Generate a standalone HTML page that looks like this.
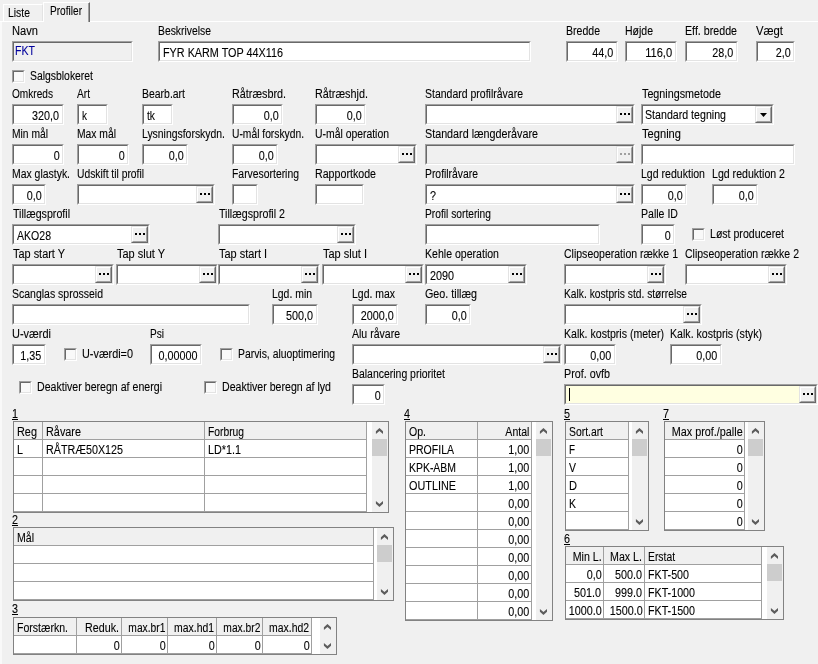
<!DOCTYPE html>
<html><head><meta charset="utf-8"><title>Profiler</title>
<style>
html,body{margin:0;padding:0}
body{width:818px;height:664px;background:#f0f0f0;position:relative;overflow:hidden;
 font-family:"Liberation Sans",sans-serif;font-size:12px;line-height:14px;color:#000}
.t{position:absolute;white-space:nowrap;display:block;height:14px;transform-origin:0 50%;backface-visibility:hidden;-webkit-text-stroke:0.1px currentColor}
.t.tr{transform-origin:100% 50%}
.t.u{text-decoration:underline;text-underline-offset:1px;text-decoration-thickness:1px}
.ed{position:absolute;box-sizing:border-box;background:#fff;border-style:solid;border-width:1px;
 border-color:#a0a0a0 #fff #fff #a0a0a0;}
.ed:before{content:"";position:absolute;left:0;top:0;right:0;bottom:0;border-style:solid;border-width:1px;
 border-color:#696969 #e3e3e3 #e3e3e3 #696969;}
.eb{position:absolute;right:1px;top:1px;bottom:1px;width:17px;box-sizing:border-box;background:#f0f0f0;
 border-style:solid;border-width:1px;border-color:#e3e3e3 #696969 #696969 #e3e3e3;z-index:2}
.eb:before{content:"";position:absolute;left:0;top:0;right:0;bottom:0;border-style:solid;border-width:1px;
 border-color:#fff #a0a0a0 #a0a0a0 #fff;}
.eb i{position:absolute;top:6px;width:2px;height:2px;background:#000}
.eb i:nth-child(1){left:3px} .eb i:nth-child(2){left:7px} .eb i:nth-child(3){left:11px}
.eb.dis i{background:#a0a0a0}
.dd{position:absolute;right:1px;top:1px;bottom:1px;width:17px;box-sizing:border-box;background:#f0f0f0;
 border-style:solid;border-width:1px;border-color:#e3e3e3 #696969 #696969 #e3e3e3;z-index:2}
.dd:before{content:"";position:absolute;left:0;top:0;right:0;bottom:0;border-style:solid;border-width:1px;
 border-color:#fff #a0a0a0 #a0a0a0 #fff;}
.dd svg{position:absolute;left:4px;top:6px}
.caret{position:absolute;left:4px;top:3px;width:1px;height:13px;background:#000}
.cb{position:absolute;width:13px;height:13px;box-sizing:border-box;background:#f9f9f9;border-style:solid;border-width:1px;
 border-color:#a0a0a0 #fff #fff #a0a0a0;}
.cb:before{content:"";position:absolute;left:0;top:0;right:0;bottom:0;border-style:solid;border-width:1px;
 border-color:#696969 #e3e3e3 #e3e3e3 #696969;}
.gr{position:absolute;box-sizing:border-box;background:#fff;border:1px solid #828282}
.gr>div{position:absolute}
.gh{background:#f0f0f0}
.gl{background:#a0a0a0}
.sb{background:#f0f0f0}
.sb svg{position:absolute;left:0;top:0}
.th{position:absolute;left:0;top:17px;width:15px;height:17px;background:#cdcdcd}
.tabline{position:absolute;height:1px;background:#fff}
.paneleft{position:absolute;left:0;top:22px;width:2px;height:642px;background:#f9f9f9}
.tab1{position:absolute;left:3px;top:4px;width:40px;height:17px;box-sizing:border-box;border:1px solid #fff;border-bottom:none;border-right:1px solid #e3e3e3}
.tab2{position:absolute;left:43px;top:2px;width:47px;height:20px;box-sizing:border-box;border-left:1px solid #fff;border-top:1px solid #fff;border-right:1px solid #696969;box-shadow:inset -1px 0 0 #a0a0a0;background:#f0f0f0}
</style></head>
<body>
<div class="tabline" style="left:0;top:21px;width:43px"></div>
<div class="tabline" style="left:90px;top:21px;width:728px"></div>
<div class="paneleft"></div>
<div class="tab1"></div>
<div class="tab2"></div>
<span class="t" style="top:6px;left:8px;transform:scaleX(0.8675);">Liste</span>
<span class="t" style="top:4px;left:50px;transform:scaleX(0.8418);">Profiler</span>
<span class="t" style="top:24px;left:12.3px;transform:scaleX(0.9281);">Navn</span>
<div class="ed" style="left:12px;top:41px;width:121px;height:21px;background:#f0f0f0;">
</div>
<span class="t" style="top:44px;left:15px;color:#00009c;transform:scaleX(0.8822);">FKT</span>
<span class="t" style="top:24px;left:158.3px;transform:scaleX(0.8638);">Beskrivelse</span>
<div class="ed" style="left:158px;top:41px;width:373px;height:21px;">
</div>
<span class="t" style="top:46px;left:163px;transform:scaleX(0.9011);">FYR KARM TOP 44X116</span>
<span class="t" style="top:24px;left:566.3px;transform:scaleX(0.8785);">Bredde</span>
<div class="ed" style="left:566px;top:41px;width:52px;height:21px;">
</div>
<span class="t tr" style="top:46px;right:204.60000000000002px;transform:scaleX(0.899);">44,0</span>
<span class="t" style="top:24px;left:625.3px;transform:scaleX(0.8746);">Højde</span>
<div class="ed" style="left:625px;top:41px;width:52px;height:21px;">
</div>
<span class="t tr" style="top:46px;right:145.60000000000002px;transform:scaleX(0.9265);">116,0</span>
<span class="t" style="top:24px;left:685.3px;transform:scaleX(0.8889);">Eff. bredde</span>
<div class="ed" style="left:685px;top:41px;width:53px;height:21px;">
</div>
<span class="t tr" style="top:46px;right:84.60000000000002px;transform:scaleX(0.899);">28,0</span>
<span class="t" style="top:24px;left:756.3px;transform:scaleX(0.9412);">Vægt</span>
<div class="ed" style="left:756px;top:41px;width:39px;height:21px;">
</div>
<span class="t tr" style="top:46px;right:27.600000000000023px;transform:scaleX(0.8989);">2,0</span>
<div class="cb" style="left:12px;top:70px"></div>
<span class="t" style="top:69px;left:30.3px;transform:scaleX(0.8664);">Salgsblokeret</span>
<span class="t" style="top:87px;left:12.3px;transform:scaleX(0.8421);">Omkreds</span>
<div class="ed" style="left:12px;top:104px;width:52px;height:21px;">
</div>
<span class="t tr" style="top:109px;right:758.6px;transform:scaleX(0.8991);">320,0</span>
<span class="t" style="top:87px;left:77.3px;transform:scaleX(0.8473);">Art</span>
<div class="ed" style="left:77px;top:104px;width:31px;height:21px;">
</div>
<span class="t" style="top:109px;left:82px;transform:scaleX(0.8333);">k</span>
<span class="t" style="top:87px;left:142.3px;transform:scaleX(0.8712);">Bearb.art</span>
<div class="ed" style="left:142px;top:104px;width:31px;height:21px;">
</div>
<span class="t" style="top:109px;left:147px;transform:scaleX(0.8562);">tk</span>
<span class="t" style="top:87px;left:232.3px;transform:scaleX(0.8995);">Råtræsbrd.</span>
<div class="ed" style="left:232px;top:104px;width:51px;height:21px;">
</div>
<span class="t tr" style="top:109px;right:539.6px;transform:scaleX(0.8989);">0,0</span>
<span class="t" style="top:87px;left:315.3px;transform:scaleX(0.9031);">Råtræshjd.</span>
<div class="ed" style="left:315px;top:104px;width:51px;height:21px;">
</div>
<span class="t tr" style="top:109px;right:456.6px;transform:scaleX(0.8989);">0,0</span>
<span class="t" style="top:87px;left:425.3px;transform:scaleX(0.8745);">Standard profilråvare</span>
<div class="ed" style="left:425px;top:104px;width:210px;height:21px;">
<div class="eb"><i></i><i></i><i></i></div>
</div>
<span class="t" style="top:87px;left:641.6px;transform:scaleX(0.8971);">Tegningsmetode</span>
<div class="ed" style="left:641px;top:104px;width:133px;height:21px"><div class="dd"><svg width="7" height="4" viewBox="0 0 7 4"><path d="M0,0 L7,0 L3.5,4 Z" fill="#000"/></svg></div></div>
<span class="t" style="top:108px;left:644.8px;transform:scaleX(0.8862);">Standard tegning</span>
<span class="t" style="top:127px;left:12.3px;transform:scaleX(0.8568);">Min mål</span>
<div class="ed" style="left:12px;top:144px;width:52px;height:21px;">
</div>
<span class="t tr" style="top:149px;right:758.6px;transform:scaleX(0.8972);">0</span>
<span class="t" style="top:127px;left:77.3px;transform:scaleX(0.8601);">Max mål</span>
<div class="ed" style="left:77px;top:144px;width:52px;height:21px;">
</div>
<span class="t tr" style="top:149px;right:693.6px;transform:scaleX(0.8972);">0</span>
<span class="t" style="top:127px;left:142.3px;transform:scaleX(0.8681);">Lysningsforskydn.</span>
<div class="ed" style="left:142px;top:144px;width:46px;height:21px;">
</div>
<span class="t tr" style="top:149px;right:634.6px;transform:scaleX(0.8989);">0,0</span>
<span class="t" style="top:127px;left:232.3px;transform:scaleX(0.8568);">U-mål forskydn.</span>
<div class="ed" style="left:232px;top:144px;width:46px;height:21px;">
</div>
<span class="t tr" style="top:149px;right:544.6px;transform:scaleX(0.8989);">0,0</span>
<span class="t" style="top:127px;left:315.3px;transform:scaleX(0.8668);">U-mål operation</span>
<div class="ed" style="left:315px;top:144px;width:102px;height:21px;">
<div class="eb"><i></i><i></i><i></i></div>
</div>
<span class="t" style="top:127px;left:425.3px;transform:scaleX(0.8962);">Standard længderåvare</span>
<div class="ed" style="left:425px;top:144px;width:210px;height:21px;background:#f0f0f0;">
<div class="eb dis"><i></i><i></i><i></i></div>
</div>
<span class="t" style="top:127px;left:641.9px;transform:scaleX(0.9275);">Tegning</span>
<div class="ed" style="left:641px;top:144px;width:154px;height:21px;">
</div>
<span class="t" style="top:167px;left:12.3px;transform:scaleX(0.8697);">Max glastyk.</span>
<div class="ed" style="left:12px;top:184px;width:34px;height:21px;">
</div>
<span class="t tr" style="top:189px;right:776.6px;transform:scaleX(0.8989);">0,0</span>
<span class="t" style="top:167px;left:77.3px;transform:scaleX(0.8586);">Udskift til profil</span>
<div class="ed" style="left:77px;top:184px;width:138px;height:21px;">
<div class="eb"><i></i><i></i><i></i></div>
</div>
<span class="t" style="top:167px;left:232.3px;transform:scaleX(0.8659);">Farvesortering</span>
<div class="ed" style="left:232px;top:184px;width:26px;height:21px;">
</div>
<span class="t" style="top:167px;left:315.3px;transform:scaleX(0.8877);">Rapportkode</span>
<div class="ed" style="left:315px;top:184px;width:49px;height:21px;">
</div>
<span class="t" style="top:167px;left:425.3px;transform:scaleX(0.8638);">Profilråvare</span>
<div class="ed" style="left:425px;top:184px;width:210px;height:21px;">
<div class="eb"><i></i><i></i><i></i></div>
</div>
<span class="t" style="top:189px;left:430px;transform:scaleX(0.8972);">?</span>
<span class="t" style="top:167px;left:641.3px;transform:scaleX(0.8799);">Lgd reduktion</span>
<div class="ed" style="left:641px;top:184px;width:46px;height:21px;">
</div>
<span class="t tr" style="top:189px;right:135.60000000000002px;transform:scaleX(0.8989);">0,0</span>
<span class="t" style="top:167px;left:712.3px;transform:scaleX(0.8823);">Lgd reduktion 2</span>
<div class="ed" style="left:712px;top:184px;width:46px;height:21px;">
</div>
<span class="t tr" style="top:189px;right:64.60000000000002px;transform:scaleX(0.8989);">0,0</span>
<span class="t" style="top:207px;left:12.9px;transform:scaleX(0.8872);">Tillægsprofil</span>
<div class="ed" style="left:12px;top:224px;width:138px;height:21px;">
<div class="eb"><i></i><i></i><i></i></div>
</div>
<span class="t" style="top:229px;left:17px;transform:scaleX(0.8785);">AKO28</span>
<span class="t" style="top:207px;left:218.9px;transform:scaleX(0.8889);">Tillægsprofil 2</span>
<div class="ed" style="left:218px;top:224px;width:138px;height:21px;">
<div class="eb"><i></i><i></i><i></i></div>
</div>
<span class="t" style="top:207px;left:425.3px;transform:scaleX(0.853);">Profil sortering</span>
<div class="ed" style="left:425px;top:224px;width:175px;height:21px;">
</div>
<span class="t" style="top:207px;left:641.3px;transform:scaleX(0.8803);">Palle ID</span>
<div class="ed" style="left:641px;top:224px;width:34px;height:21px;">
</div>
<span class="t tr" style="top:229px;right:147.60000000000002px;transform:scaleX(0.8972);">0</span>
<div class="cb" style="left:692px;top:228px"></div>
<span class="t" style="top:227px;left:710.3px;transform:scaleX(0.8805);">Løst produceret</span>
<span class="t" style="top:247px;left:12.9px;transform:scaleX(0.91);">Tap start Y</span>
<div class="ed" style="left:12px;top:264px;width:102px;height:21px;">
<div class="eb"><i></i><i></i><i></i></div>
</div>
<span class="t" style="top:247px;left:116.9px;transform:scaleX(0.9146);">Tap slut Y</span>
<div class="ed" style="left:116px;top:264px;width:102px;height:21px;">
<div class="eb"><i></i><i></i><i></i></div>
</div>
<span class="t" style="top:247px;left:218.9px;transform:scaleX(0.911);">Tap start I</span>
<div class="ed" style="left:218px;top:264px;width:102px;height:21px;">
<div class="eb"><i></i><i></i><i></i></div>
</div>
<span class="t" style="top:247px;left:322.9px;transform:scaleX(0.9161);">Tap slut I</span>
<div class="ed" style="left:322px;top:264px;width:102px;height:21px;">
<div class="eb"><i></i><i></i><i></i></div>
</div>
<span class="t" style="top:247px;left:425.3px;transform:scaleX(0.8801);">Kehle operation</span>
<div class="ed" style="left:425px;top:264px;width:102px;height:21px;">
<div class="eb"><i></i><i></i><i></i></div>
</div>
<span class="t" style="top:269px;left:430px;transform:scaleX(0.8988);">2090</span>
<span class="t" style="top:247px;left:564.3px;transform:scaleX(0.8764);">Clipseoperation række 1</span>
<div class="ed" style="left:564px;top:264px;width:102px;height:21px;">
<div class="eb"><i></i><i></i><i></i></div>
</div>
<span class="t" style="top:247px;left:685.3px;transform:scaleX(0.8764);">Clipseoperation række 2</span>
<div class="ed" style="left:685px;top:264px;width:102px;height:21px;">
<div class="eb"><i></i><i></i><i></i></div>
</div>
<span class="t" style="top:287px;left:12.3px;transform:scaleX(0.8745);">Scanglas sprosseid</span>
<div class="ed" style="left:12px;top:304px;width:238px;height:21px;">
</div>
<span class="t" style="top:287px;left:272.3px;transform:scaleX(0.869);">Lgd. min</span>
<div class="ed" style="left:272px;top:304px;width:46px;height:21px;">
</div>
<span class="t tr" style="top:309px;right:504.6px;transform:scaleX(0.8991);">500,0</span>
<span class="t" style="top:287px;left:352.3px;transform:scaleX(0.8712);">Lgd. max</span>
<div class="ed" style="left:352px;top:304px;width:46px;height:21px;">
</div>
<span class="t tr" style="top:309px;right:424.6px;transform:scaleX(0.8991);">2000,0</span>
<span class="t" style="top:287px;left:425.3px;transform:scaleX(0.8961);">Geo. tillæg</span>
<div class="ed" style="left:425px;top:304px;width:46px;height:21px;">
</div>
<span class="t tr" style="top:309px;right:351.6px;transform:scaleX(0.8989);">0,0</span>
<span class="t" style="top:287px;left:564.3px;transform:scaleX(0.8539);">Kalk. kostpris std. størrelse</span>
<div class="ed" style="left:564px;top:304px;width:138px;height:21px;">
<div class="eb"><i></i><i></i><i></i></div>
</div>
<span class="t" style="top:327px;left:12.3px;transform:scaleX(0.914);">U-værdi</span>
<div class="ed" style="left:12px;top:344px;width:34px;height:21px;">
</div>
<span class="t tr" style="top:349px;right:776.6px;transform:scaleX(0.899);">1,35</span>
<div class="cb" style="left:64px;top:348px"></div>
<span class="t" style="top:347px;left:82.3px;transform:scaleX(0.9049);">U-værdi=0</span>
<span class="t" style="top:327px;left:150.3px;transform:scaleX(0.8397);">Psi</span>
<div class="ed" style="left:150px;top:344px;width:52px;height:21px;">
</div>
<span class="t tr" style="top:349px;right:620.6px;transform:scaleX(0.8988);">0,00000</span>
<div class="cb" style="left:220px;top:348px"></div>
<span class="t" style="top:347px;left:238.3px;transform:scaleX(0.8656);">Parvis, aluoptimering</span>
<span class="t" style="top:327px;left:352.3px;transform:scaleX(0.8775);">Alu råvare</span>
<div class="ed" style="left:352px;top:344px;width:210px;height:21px;">
<div class="eb"><i></i><i></i><i></i></div>
</div>
<span class="t" style="top:327px;left:564.3px;transform:scaleX(0.8822);">Kalk. kostpris (meter)</span>
<div class="ed" style="left:564px;top:344px;width:52px;height:21px;">
</div>
<span class="t tr" style="top:349px;right:206.60000000000002px;transform:scaleX(0.899);">0,00</span>
<span class="t" style="top:327px;left:670.3px;transform:scaleX(0.8845);">Kalk. kostpris (styk)</span>
<div class="ed" style="left:670px;top:344px;width:52px;height:21px;">
</div>
<span class="t tr" style="top:349px;right:100.60000000000002px;transform:scaleX(0.899);">0,00</span>
<div class="cb" style="left:19px;top:381px"></div>
<span class="t" style="top:380px;left:37.3px;transform:scaleX(0.8839);">Deaktiver beregn af energi</span>
<div class="cb" style="left:204px;top:381px"></div>
<span class="t" style="top:380px;left:222.3px;transform:scaleX(0.8833);">Deaktiver beregn af lyd</span>
<span class="t" style="top:367px;left:352.3px;transform:scaleX(0.8713);">Balancering prioritet</span>
<div class="ed" style="left:352px;top:384px;width:33px;height:21px;">
</div>
<span class="t tr" style="top:389px;right:437.6px;transform:scaleX(0.8972);">0</span>
<span class="t" style="top:367px;left:564.3px;transform:scaleX(0.8956);">Prof. ovfb</span>
<div class="ed" style="left:564px;top:384px;width:254px;height:21px;background:#ffffe1;">
<div class="eb"><i></i><i></i><i></i></div>
<div class="caret"></div>
</div>
<span class="t u" style="top:407px;left:12px;transform:scaleX(0.8972);">1</span>
<div class="gr" style="left:13px;top:421px;width:376px;height:92px">
<div class="gh" style="left:0;top:0;width:353px;height:17px"></div>
<div class="gl" style="left:0;top:17px;width:353px;height:1px"></div>
<div class="gl" style="left:0;top:35px;width:353px;height:1px"></div>
<div class="gl" style="left:0;top:53px;width:353px;height:1px"></div>
<div class="gl" style="left:0;top:71px;width:353px;height:1px"></div>
<div class="gl" style="left:0;top:89px;width:353px;height:1px"></div>
<div class="gl" style="left:28px;top:0;width:1px;height:90px"></div>
<div class="gl" style="left:190px;top:0;width:1px;height:90px"></div>
<div class="gl" style="left:352px;top:0;width:1px;height:90px"></div>
<div class="sb" style="left:358px;top:0;width:16px;height:90px">
<svg width="16" height="90" viewBox="0 0 16 90" fill="#5c5c5c"><path d="M7.45,6.0 L11.0,9.3 L11.0,12.1 L7.45,9.0 L3.9,12.1 L3.9,9.3Z"/><path d="M7.45,85.0 L11.0,81.7 L11.0,78.9 L7.45,82.0 L3.9,78.9 L3.9,81.7Z"/></svg>
<div class="th"></div>
</div>
</div>
<span class="t" style="top:425px;left:17.2px;transform:scaleX(0.9084);">Reg</span>
<span class="t" style="top:425px;left:46.2px;transform:scaleX(0.9047);">Råvare</span>
<span class="t" style="top:425px;left:208.2px;transform:scaleX(0.8565);">Forbrug</span>
<span class="t" style="top:443px;left:17.2px;transform:scaleX(0.8972);">L</span>
<span class="t" style="top:443px;left:46.2px;transform:scaleX(0.8949);">RÅTRÆ50X125</span>
<span class="t" style="top:443px;left:208.2px;transform:scaleX(0.8991);">LD*1.1</span>
<span class="t u" style="top:513px;left:12px;transform:scaleX(0.8972);">2</span>
<div class="gr" style="left:13px;top:527px;width:381px;height:74px">
<div class="gh" style="left:0;top:0;width:360px;height:17px"></div>
<div class="gl" style="left:0;top:17px;width:360px;height:1px"></div>
<div class="gl" style="left:0;top:35px;width:360px;height:1px"></div>
<div class="gl" style="left:0;top:53px;width:360px;height:1px"></div>
<div class="gl" style="left:0;top:71px;width:360px;height:1px"></div>
<div class="gl" style="left:359px;top:0;width:1px;height:72px"></div>
<div class="sb" style="left:363px;top:0;width:16px;height:72px">
<svg width="16" height="72" viewBox="0 0 16 72" fill="#5c5c5c"><path d="M7.45,6.0 L11.0,9.3 L11.0,12.1 L7.45,9.0 L3.9,12.1 L3.9,9.3Z"/><path d="M7.45,67.0 L11.0,63.7 L11.0,60.9 L7.45,64.0 L3.9,60.9 L3.9,63.7Z"/></svg>
<div class="th"></div>
</div>
</div>
<span class="t" style="top:531px;left:17.2px;transform:scaleX(0.8788);">Mål</span>
<span class="t u" style="top:602px;left:12px;transform:scaleX(0.8972);">3</span>
<div class="gr" style="left:13px;top:617px;width:324px;height:38px">
<div class="gh" style="left:0;top:0;width:298px;height:17px"></div>
<div class="gl" style="left:0;top:17px;width:298px;height:1px"></div>
<div class="gl" style="left:0;top:35px;width:298px;height:1px"></div>
<div class="gl" style="left:62px;top:0;width:1px;height:36px"></div>
<div class="gl" style="left:107px;top:0;width:1px;height:36px"></div>
<div class="gl" style="left:153px;top:0;width:1px;height:36px"></div>
<div class="gl" style="left:202px;top:0;width:1px;height:36px"></div>
<div class="gl" style="left:248px;top:0;width:1px;height:36px"></div>
<div class="gl" style="left:297px;top:0;width:1px;height:36px"></div>
<div class="sb" style="left:306px;top:0;width:16px;height:36px">
<svg width="16" height="36" viewBox="0 0 16 36" fill="#5c5c5c"><path d="M7.45,6.0 L11.0,9.3 L11.0,12.1 L7.45,9.0 L3.9,12.1 L3.9,9.3Z"/><path d="M7.45,31.0 L11.0,27.7 L11.0,24.9 L7.45,28.0 L3.9,24.9 L3.9,27.7Z"/></svg>
</div>
</div>
<span class="t" style="top:621px;left:17.2px;transform:scaleX(0.8791);">Forstærkn.</span>
<span class="t tr" style="top:621px;right:698.6px;transform:scaleX(0.894);">Reduk.</span>
<span class="t tr" style="top:621px;right:652.6px;transform:scaleX(0.8533);">max.br1</span>
<span class="t tr" style="top:621px;right:603.6px;transform:scaleX(0.869);">max.hd1</span>
<span class="t tr" style="top:621px;right:557.6px;transform:scaleX(0.8533);">max.br2</span>
<span class="t tr" style="top:621px;right:508.6px;transform:scaleX(0.869);">max.hd2</span>
<span class="t tr" style="top:639px;right:698.6px;transform:scaleX(0.8972);">0</span>
<span class="t tr" style="top:639px;right:652.6px;transform:scaleX(0.8972);">0</span>
<span class="t tr" style="top:639px;right:603.6px;transform:scaleX(0.8972);">0</span>
<span class="t tr" style="top:639px;right:557.6px;transform:scaleX(0.8972);">0</span>
<span class="t tr" style="top:639px;right:508.6px;transform:scaleX(0.8972);">0</span>
<span class="t u" style="top:407px;left:404px;transform:scaleX(0.8972);">4</span>
<div class="gr" style="left:405px;top:421px;width:148px;height:200px">
<div class="gh" style="left:0;top:0;width:126px;height:17px"></div>
<div class="gl" style="left:0;top:17px;width:126px;height:1px"></div>
<div class="gl" style="left:0;top:35px;width:126px;height:1px"></div>
<div class="gl" style="left:0;top:53px;width:126px;height:1px"></div>
<div class="gl" style="left:0;top:71px;width:126px;height:1px"></div>
<div class="gl" style="left:0;top:89px;width:126px;height:1px"></div>
<div class="gl" style="left:0;top:107px;width:126px;height:1px"></div>
<div class="gl" style="left:0;top:125px;width:126px;height:1px"></div>
<div class="gl" style="left:0;top:143px;width:126px;height:1px"></div>
<div class="gl" style="left:0;top:161px;width:126px;height:1px"></div>
<div class="gl" style="left:0;top:179px;width:126px;height:1px"></div>
<div class="gl" style="left:0;top:197px;width:126px;height:1px"></div>
<div class="gl" style="left:71px;top:0;width:1px;height:198px"></div>
<div class="gl" style="left:125px;top:0;width:1px;height:198px"></div>
<div class="sb" style="left:130px;top:0;width:16px;height:198px">
<svg width="16" height="198" viewBox="0 0 16 198" fill="#5c5c5c"><path d="M7.45,6.0 L11.0,9.3 L11.0,12.1 L7.45,9.0 L3.9,12.1 L3.9,9.3Z"/><path d="M7.45,193.0 L11.0,189.7 L11.0,186.9 L7.45,190.0 L3.9,186.9 L3.9,189.7Z"/></svg>
<div class="th"></div>
</div>
</div>
<span class="t" style="top:425px;left:409.2px;transform:scaleX(0.8788);">Op.</span>
<span class="t tr" style="top:425px;right:288.6px;transform:scaleX(0.8772);">Antal</span>
<span class="t" style="top:443px;left:409.2px;transform:scaleX(0.8762);">PROFILA</span>
<span class="t tr" style="top:443px;right:288.6px;transform:scaleX(0.899);">1,00</span>
<span class="t" style="top:461px;left:409.2px;transform:scaleX(0.8701);">KPK-ABM</span>
<span class="t tr" style="top:461px;right:288.6px;transform:scaleX(0.899);">1,00</span>
<span class="t" style="top:479px;left:409.2px;transform:scaleX(0.9036);">OUTLINE</span>
<span class="t tr" style="top:479px;right:288.6px;transform:scaleX(0.899);">1,00</span>
<span class="t tr" style="top:497px;right:288.6px;transform:scaleX(0.899);">0,00</span>
<span class="t tr" style="top:515px;right:288.6px;transform:scaleX(0.899);">0,00</span>
<span class="t tr" style="top:533px;right:288.6px;transform:scaleX(0.899);">0,00</span>
<span class="t tr" style="top:551px;right:288.6px;transform:scaleX(0.899);">0,00</span>
<span class="t tr" style="top:569px;right:288.6px;transform:scaleX(0.899);">0,00</span>
<span class="t tr" style="top:587px;right:288.6px;transform:scaleX(0.899);">0,00</span>
<span class="t tr" style="top:605px;right:288.6px;transform:scaleX(0.899);">0,00</span>
<span class="t u" style="top:407px;left:564px;transform:scaleX(0.8972);">5</span>
<div class="gr" style="left:565px;top:421px;width:84px;height:110px">
<div class="gh" style="left:0;top:0;width:63px;height:17px"></div>
<div class="gl" style="left:0;top:17px;width:63px;height:1px"></div>
<div class="gl" style="left:0;top:35px;width:63px;height:1px"></div>
<div class="gl" style="left:0;top:53px;width:63px;height:1px"></div>
<div class="gl" style="left:0;top:71px;width:63px;height:1px"></div>
<div class="gl" style="left:0;top:89px;width:63px;height:1px"></div>
<div class="gl" style="left:0;top:107px;width:63px;height:1px"></div>
<div class="gl" style="left:62px;top:0;width:1px;height:108px"></div>
<div class="sb" style="left:66px;top:0;width:16px;height:108px">
<svg width="16" height="108" viewBox="0 0 16 108" fill="#5c5c5c"><path d="M7.45,6.0 L11.0,9.3 L11.0,12.1 L7.45,9.0 L3.9,12.1 L3.9,9.3Z"/><path d="M7.45,103.0 L11.0,99.7 L11.0,96.9 L7.45,100.0 L3.9,96.9 L3.9,99.7Z"/></svg>
<div class="th"></div>
</div>
</div>
<span class="t" style="top:425px;left:569.2px;transform:scaleX(0.8638);">Sort.art</span>
<span class="t" style="top:443px;left:569.2px;transform:scaleX(0.817);">F</span>
<span class="t" style="top:461px;left:569.2px;transform:scaleX(0.8733);">V</span>
<span class="t" style="top:479px;left:569.2px;transform:scaleX(0.9225);">D</span>
<span class="t" style="top:497px;left:569.2px;transform:scaleX(0.8733);">K</span>
<span class="t u" style="top:407px;left:663px;transform:scaleX(0.8972);">7</span>
<div class="gr" style="left:664px;top:421px;width:101px;height:110px">
<div class="gh" style="left:0;top:0;width:80px;height:17px"></div>
<div class="gl" style="left:0;top:17px;width:80px;height:1px"></div>
<div class="gl" style="left:0;top:35px;width:80px;height:1px"></div>
<div class="gl" style="left:0;top:53px;width:80px;height:1px"></div>
<div class="gl" style="left:0;top:71px;width:80px;height:1px"></div>
<div class="gl" style="left:0;top:89px;width:80px;height:1px"></div>
<div class="gl" style="left:0;top:107px;width:80px;height:1px"></div>
<div class="gl" style="left:79px;top:0;width:1px;height:108px"></div>
<div class="sb" style="left:83px;top:0;width:16px;height:108px">
<svg width="16" height="108" viewBox="0 0 16 108" fill="#5c5c5c"><path d="M7.45,6.0 L11.0,9.3 L11.0,12.1 L7.45,9.0 L3.9,12.1 L3.9,9.3Z"/><path d="M7.45,103.0 L11.0,99.7 L11.0,96.9 L7.45,100.0 L3.9,96.9 L3.9,99.7Z"/></svg>
<div class="th"></div>
</div>
</div>
<span class="t tr" style="top:425px;right:75.60000000000002px;transform:scaleX(0.9021);">Max prof./palle</span>
<span class="t tr" style="top:443px;right:75.60000000000002px;transform:scaleX(0.8972);">0</span>
<span class="t tr" style="top:461px;right:75.60000000000002px;transform:scaleX(0.8972);">0</span>
<span class="t tr" style="top:479px;right:75.60000000000002px;transform:scaleX(0.8972);">0</span>
<span class="t tr" style="top:497px;right:75.60000000000002px;transform:scaleX(0.8972);">0</span>
<span class="t tr" style="top:515px;right:75.60000000000002px;transform:scaleX(0.8972);">0</span>
<span class="t u" style="top:532px;left:564px;transform:scaleX(0.8972);">6</span>
<div class="gr" style="left:565px;top:546px;width:219px;height:74px">
<div class="gh" style="left:0;top:0;width:196px;height:17px"></div>
<div class="gl" style="left:0;top:17px;width:196px;height:1px"></div>
<div class="gl" style="left:0;top:35px;width:196px;height:1px"></div>
<div class="gl" style="left:0;top:53px;width:196px;height:1px"></div>
<div class="gl" style="left:0;top:71px;width:196px;height:1px"></div>
<div class="gl" style="left:37px;top:0;width:1px;height:72px"></div>
<div class="gl" style="left:78px;top:0;width:1px;height:72px"></div>
<div class="gl" style="left:195px;top:0;width:1px;height:72px"></div>
<div class="sb" style="left:201px;top:0;width:16px;height:72px">
<svg width="16" height="72" viewBox="0 0 16 72" fill="#5c5c5c"><path d="M7.45,6.0 L11.0,9.3 L11.0,12.1 L7.45,9.0 L3.9,12.1 L3.9,9.3Z"/><path d="M7.45,67.0 L11.0,63.7 L11.0,60.9 L7.45,64.0 L3.9,60.9 L3.9,63.7Z"/></svg>
<div class="th"></div>
</div>
</div>
<span class="t tr" style="top:550px;right:216.60000000000002px;transform:scaleX(0.8872);">Min L.</span>
<span class="t tr" style="top:550px;right:175.60000000000002px;transform:scaleX(0.8885);">Max L.</span>
<span class="t" style="top:550px;left:648.2px;transform:scaleX(0.8614);">Erstat</span>
<span class="t tr" style="top:568px;right:216.60000000000002px;transform:scaleX(0.8989);">0,0</span>
<span class="t tr" style="top:568px;right:175.60000000000002px;transform:scaleX(0.8991);">500.0</span>
<span class="t" style="top:568px;left:648.2px;transform:scaleX(0.8907);">FKT-500</span>
<span class="t tr" style="top:586px;right:216.60000000000002px;transform:scaleX(0.8991);">501.0</span>
<span class="t tr" style="top:586px;right:175.60000000000002px;transform:scaleX(0.8991);">999.0</span>
<span class="t" style="top:586px;left:648.2px;transform:scaleX(0.8918);">FKT-1000</span>
<span class="t tr" style="top:604px;right:216.60000000000002px;transform:scaleX(0.8991);">1000.0</span>
<span class="t tr" style="top:604px;right:175.60000000000002px;transform:scaleX(0.8991);">1500.0</span>
<span class="t" style="top:604px;left:648.2px;transform:scaleX(0.8918);">FKT-1500</span>
</body></html>
